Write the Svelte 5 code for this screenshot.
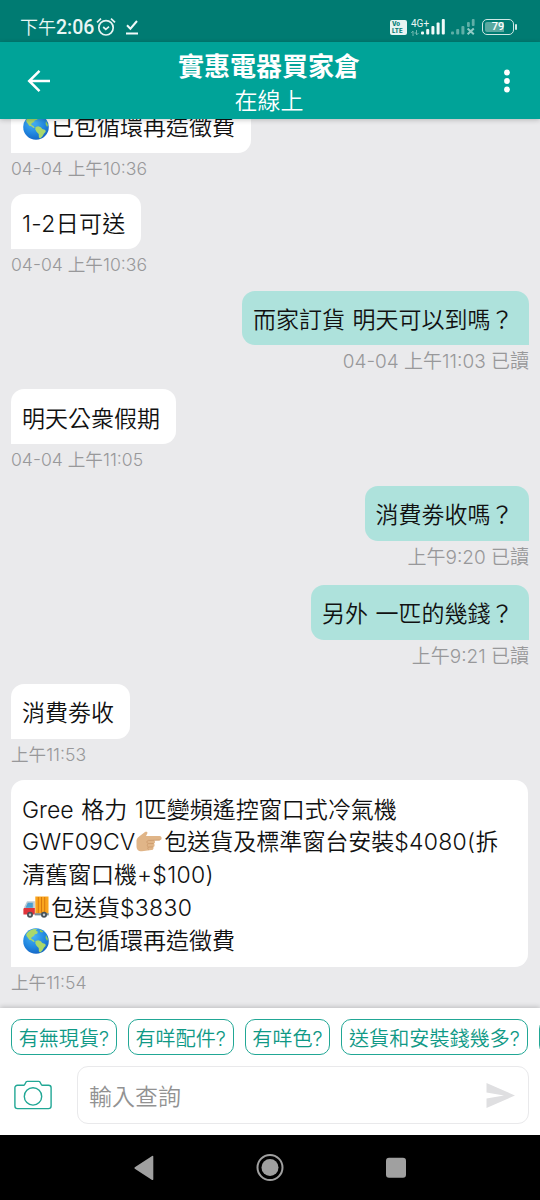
<script>
  const messages = [
    { side: 'in', lines: [[{ icon: 'earth' }, { t: '已包循環再造徵費' }]], time: '04-04 上午10:36' },
    { side: 'in', lines: [[{ t: '1-2日可送', loose: true }]], time: '04-04 上午10:36' },
    { side: 'out', lines: [[{ t: '而家訂貨 明天可以到嗎？' }]], time: '04-04 上午11:03 已讀' },
    { side: 'in', lines: [[{ t: '明天公衆假期' }]], time: '04-04 上午11:05' },
    { side: 'out', lines: [[{ t: '消費劵收嗎？' }]], time: '上午9:20 已讀' },
    { side: 'out', lines: [[{ t: '另外 一匹的幾錢？' }]], time: '上午9:21 已讀' },
    { side: 'in', lines: [[{ t: '消費劵收' }]], time: '上午11:53' },
    {
      side: 'in',
      wide: true,
      lines: [
        [{ t: 'Gree 格力 1匹變頻遙控窗口式冷氣機' }],
        [{ t: 'GWF09CV' }, { icon: 'hand' }, { t: '包送貨及標準窗台安裝' }, { t: '$4080(', loose: true }, { t: '拆' }],
        [{ t: '清舊窗口機' }, { t: '+$100)', loose: true }],
        [{ icon: 'truck' }, { t: '包送貨' }, { t: '$3830', loose: true }],
        [{ icon: 'earth' }, { t: '已包循環再造徵費' }]
      ],
      time: '上午11:54'
    }
  ];
  const replies = ['有無現貨?', '有咩配件?', '有咩色?', '送貨和安裝錢幾多?'];
</script>

{#snippet emoji(name)}
  <svg class="emoji" viewBox="0 0 26 26" aria-hidden="true">
    {#if name === 'earth'}
      <defs>
        <radialGradient id="sea" cx=".4" cy=".3" r=".75">
          <stop offset="0" stop-color="#49b4f5" />
          <stop offset=".6" stop-color="#2187e0" />
          <stop offset="1" stop-color="#1463c2" />
        </radialGradient>
      </defs>
      <circle cx="13" cy="13" r="12.8" fill="url(#sea)" />
      <path fill="#a9d86b" d="M3.2 6.2C5 3.4 8 1.5 10.8 1l3.4.2-1.3 1.6 1.9 1-.6 1.9-2.2.5-1.2 1.8-2.2 1.2-.3 1.7 2 .8 1.4 2-1.1.3-2.2-1.7-2.1-.5-1.4-2.1L3.5 8Z" />
      <path fill="#a9d86b" d="m12.5 13.1 2.7-.8 2.6 1 1.5 1.8 3 .9.4 1.7-1.8 2.1-1.6 2.7-2.1 2-1.3-1-.2-3.6-2.2-2.1-1.2-2.4Z" />
      <path fill="#8ccb55" d="m16.6 1.3 3.8 2.2-1.3 1.1-2-.6Z M23 7l2 4-.9 2.1-1.6-3Z" />
    {:else if name === 'hand'}
      <path fill="#e0b588" d="M.5 11.5c.3-2.2 1.9-3.4 3.6-4.7L9 3.1c1.3-.9 2.9-.2 2.4 1.2L10 7.1h13.6c2.6 0 2.7 4 0 4.1H18c1.4.9 1.3 2.8 0 3.4 1 1.1.7 3-.6 3.5.5 1.4-.4 2.8-2 3L6 22.2c-3.9.2-5.6-2-5.5-5.6Z" />
      <path fill="none" stroke="#c9986a" stroke-width=".8" d="M23.8 11.1 12.5 11.4c-2.2.4-2 3 .1 3.2l5-.1m-5.3.1c-1.5.8-1.4 3 .2 3.4l4.6-.1m-4.5.1c-1.1.8-1 2.2.1 2.8" />
    {:else}
      <path fill="#f9a51f" d="M12.3 1.5h13.2v17.2H12.3Z" />
      <path stroke="#d9780e" stroke-width="1" d="M15.3 2v16M18.5 2v16M21.7 2v16" />
      <path fill="#bccbd4" d="M4 6.2h7.8v12.5H1.2V12Z" />
      <path fill="#4c9ed0" d="M4.8 7.7h5v5H2.6Z" />
      <path fill="#e0333a" d="M1 13h10.8v6.5H.4V14Z" />
      <path fill="#7a8b94" d="M11.8 18.2h13.9v2.2H11.8Z" />
      <circle cx="7" cy="19.8" r="3" fill="#49535a" /><circle cx="7" cy="19.8" r="1.2" fill="#c7d0d5" />
      <circle cx="21" cy="19.8" r="3" fill="#49535a" /><circle cx="21" cy="19.8" r="1.2" fill="#c7d0d5" />
    {/if}
  </svg>
{/snippet}

<div class="screen">
  <div class="status">
    <span class="clock">下午<b>2:06</b></span>
    <svg class="alarm" viewBox="0 0 20 20" fill="none" stroke="#e6f4f2" stroke-width="1.7">
      <circle cx="10" cy="10.8" r="7.2" /><path d="m7.2 10 2.6 2.3 3.2-2.6M1 5.3 5 1.7M19 5.3l-4-3.6" />
    </svg>
    <svg class="done" viewBox="0 0 14 17" fill="none" stroke="#f1faf9" stroke-width="2">
      <path d="m2 6.3 3.4 3.4L12 2M1 14.5h12" />
    </svg>
    <span class="grow"></span>
    <span class="volte"><i>Vo</i><i>LTE</i></span>
    <span class="net">4G+<svg viewBox="0 0 8 6"><path d="M2 6V1L.3 3M3.5 3H6M5.5 0v5l2-2" fill="none" stroke="#6fb8b0" /></svg></span>
    <svg class="bars" viewBox="0 0 24 16" fill="#f1faf9">
      <rect y="12.5" width="3" height="3" rx="1" /><rect x="5.2" y="10" width="3" height="5.5" rx="1" /><rect x="10.4" y="7" width="3" height="8.5" rx="1" /><rect x="15.6" y="3.5" width="3" height="12" rx="1" /><rect x="20.8" width="3" height="15.5" rx="1" />
    </svg>
    <svg class="nosim" viewBox="0 0 24 16" fill="#5fafa7">
      <rect y="12.5" width="3" height="3" rx="1" /><rect x="5.2" y="10" width="3" height="5.5" rx="1" /><rect x="10.4" y="7" width="3" height="8.5" rx="1" /><rect x="16" y="3" width="2.8" height="5" rx="1" /><rect x="20.8" width="2.8" height="7" rx="1" />
      <path d="m16.6 9.4 6.2 5.8m0-5.8-6.2 5.8" stroke="#8fcac4" stroke-width="2" />
    </svg>
    <span class="battery"><span class="cell">79</span><span class="tip"></span></span>
  </div>

  <header>
    <svg class="back" viewBox="0 0 24 24" fill="none" stroke="#fff" stroke-width="2.5"><path d="M23 12H2.5M12.5 1.8 2.2 12l10.3 10.2" /></svg>
    <div class="title"><h1>實惠電器買家倉</h1><p>在線上</p></div>
    <svg class="more" viewBox="0 0 6 24" fill="#fff"><circle cx="3" cy="3.5" r="2.9" /><circle cx="3" cy="12" r="2.9" /><circle cx="3" cy="20.5" r="2.9" /></svg>
  </header>

  <main>
    {#each messages as m}
      <div class="msg {m.side}">
        <div class="bubble" class:wide={m.wide}>
          {#each m.lines as line}
            <div class="line">{#each line as part}{#if part.icon}{@render emoji(part.icon)}{:else}<span class:loose={part.loose}>{part.t}</span>{/if}{/each}</div>
          {/each}
        </div>
        <div class="time">{m.time}</div>
      </div>
    {/each}
  </main>

  <footer>
    <div class="chips">
      {#each replies as r}<button>{r}</button>{/each}
      <button class="next" aria-label="更多"></button>
    </div>
    <div class="compose">
      <svg class="camera" viewBox="0 0 38 30" fill="none" stroke="#21a795" stroke-width="1.4">
        <path d="M3.5 5.2h6.2c1.8 0 1.3-3.8 3.5-3.8h11.6c2.2 0 1.7 3.8 3.5 3.8h6.2a2.6 2.6 0 0 1 2.6 2.6v18.2a2.6 2.6 0 0 1-2.6 2.6h-31A2.6 2.6 0 0 1 .9 26V7.8a2.6 2.6 0 0 1 2.6-2.6Z" /><circle cx="19" cy="16.4" r="8.7" />
      </svg>
      <div class="field">
        <span>輸入查詢</span>
        <svg class="send" viewBox="0 0 29 25"><path fill="#dfdfe1" d="M.5 0 29 12.5.5 25v-9.6l17.5-2.9L.5 9.6Z" /></svg>
      </div>
    </div>
  </footer>

  <nav>
    <svg viewBox="0 0 28 28" fill="#a0a0a0"><path d="M23.3 2.7v22.6q0 1.2-1.2.6L4.8 14.8q-.9-.8 0-1.5L22.1 2.1q1.2-.7 1.2.6Z" /></svg>
    <svg viewBox="0 0 28 28"><circle cx="14" cy="13.5" r="12.5" fill="none" stroke="#a0a0a0" stroke-width="2" /><circle cx="14" cy="13.5" r="8.5" fill="#a0a0a0" /></svg>
    <svg viewBox="0 0 28 28" fill="#a0a0a0"><rect x="4" y="3.7" width="20" height="20" rx="3" /></svg>
  </nav>
</div>

<style>
  :global(body) { margin: 0; }
  .screen {
    width: 540px; height: 1200px; overflow: hidden;
    display: flex; flex-direction: column;
    background: #eaeaec;
    font-family: Inter, "Noto Sans CJK TC", sans-serif;
  }
  .status {
    box-sizing: border-box; flex: none; height: 42px; padding: 12px 23px 0 20px;
    display: flex; align-items: center;
    background: #007b72; color: #e9f6f4;
    font-family: Roboto, "Noto Sans CJK TC", sans-serif;
  }
  .clock { font-size: 18px; line-height: 30px; white-space: nowrap; font-weight: 350; padding-top: 2px; }
  .clock b { font-size: 19.5px; font-weight: 500; }
  .alarm { width: 20px; height: 20px; margin-left: 2px; }
  .done { width: 14px; height: 17px; margin-left: 9px; }
  .grow { flex: 1; }
  .volte {
    display: flex; flex-direction: column; justify-content: center; width: 17px; height: 15px;
    background: #e6f4f2; border-radius: 2px; color: #007b72;
  }
  .volte i { font: 800 6px/7px Inter, sans-serif; height: 7px; padding-left: 2px; }
  .net {
    display: flex; flex-direction: column; width: 20px; height: 19px; margin-left: 4px;
    font-size: 10px; line-height: 11px; white-space: nowrap;
  }
  .net svg { width: 8px; height: 6px; margin-top: 1px; }
  .bars { width: 24px; height: 16px; margin-left: -10px; }
  .nosim { width: 24px; height: 16px; margin-left: 6px; }
  .battery { display: flex; align-items: center; margin-left: 7px; gap: 1px; }
  .cell {
    box-sizing: border-box; width: 32px; height: 16px; border: 1.5px solid #cfe8e5; border-radius: 5px;
    background: linear-gradient(90deg, #5aa9a1 72%, transparent 72%) content-box; padding: 2px;
    font-size: 11px; font-weight: 500; line-height: 9.5px; text-align: center; color: #fff;
  }
  .tip { width: 2px; height: 6px; background: #cfe8e5; border-radius: 1px; }

  header {
    box-sizing: border-box; flex: none; height: 77px; padding: 0 30px 0 27px;
    display: flex; align-items: center; justify-content: space-between;
    background: #00a398; color: #fff; box-shadow: 0 1px 5px rgba(0, 0, 0, .22); z-index: 1;
  }
  .back { width: 24px; height: 24px; }
  .more { width: 6px; height: 24px; }
  .title { text-align: center; margin-left: -17px; }
  h1 { margin: 0; font-size: 26px; line-height: 36px; font-weight: 700; padding-top: 5px; }
  p { margin: 0; font-size: 23px; line-height: 32px; font-weight: 350; }

  main {
    flex: 1; min-height: 0; overflow: hidden; padding: 0 11px;
    display: flex; flex-direction: column; justify-content: flex-end;
  }
  .msg { flex: none; display: flex; flex-direction: column; align-items: flex-start; }
  .msg.out { align-items: flex-end; }
  .bubble {
    box-sizing: border-box; padding: 11px 15.5px 11px 11px;
    background: #fff; color: #111; border-radius: 13px 13px 13px 0;
  }
  .wide { width: 517px; }
  .out .bubble { background: #aee2dc; border-radius: 13px 13px 0 13px; }
  .line { display: flex; height: 32.9px; align-items: center; font-size: 23px; font-weight: 350; line-height: 33px; word-spacing: 1.1px; white-space: pre; }
  .line span { padding-top: 5px; }
  .loose { letter-spacing: .3px; }
  .emoji { flex: none; width: 26px; height: 26px; margin: 4px 2px 0 1px; }
  .time { height: 40.5px; padding-top: 1px; font-size: 17.6px; line-height: 30px; font-weight: 350; color: #98989a; white-space: nowrap; }
  .out .time { height: 42px; padding-top: 2px; font-size: 19px; }

  footer {
    box-sizing: border-box; flex: none; height: 127px; padding: 11px 11px 0;
    background: #fff; box-shadow: 0 -1px 5px rgba(0, 0, 0, .2); z-index: 1;
  }
  .chips { display: flex; gap: 11px; margin-right: -11px; overflow: hidden; }
  button {
    box-sizing: border-box; flex: none; height: 36px; padding: 3px 6.7px 0;
    border: 1.5px solid #21a795; border-radius: 10px; background: #fff; color: #109986;
    font: 350 20.1px/30px Inter, "Noto Sans CJK TC", sans-serif; white-space: nowrap;
  }
  .next { width: 106px; }
  .compose { display: flex; align-items: center; margin-top: 11px; }
  .camera { width: 38px; height: 30px; margin: 0 25px 0 3px; }
  .field {
    box-sizing: border-box; flex: 1; height: 58px; padding: 0 13px 0 11px;
    display: flex; align-items: center; justify-content: space-between;
    border: 1.5px solid #e9e9eb; border-radius: 11px; color: #929292; font-size: 23px; font-weight: 350;
  }
  .send { width: 29px; height: 25px; }

  nav {
    flex: none; height: 65px; background: #000;
    display: flex; align-items: center; justify-content: center; gap: 98px;
  }
  nav svg { width: 28px; height: 28px; }
</style>
